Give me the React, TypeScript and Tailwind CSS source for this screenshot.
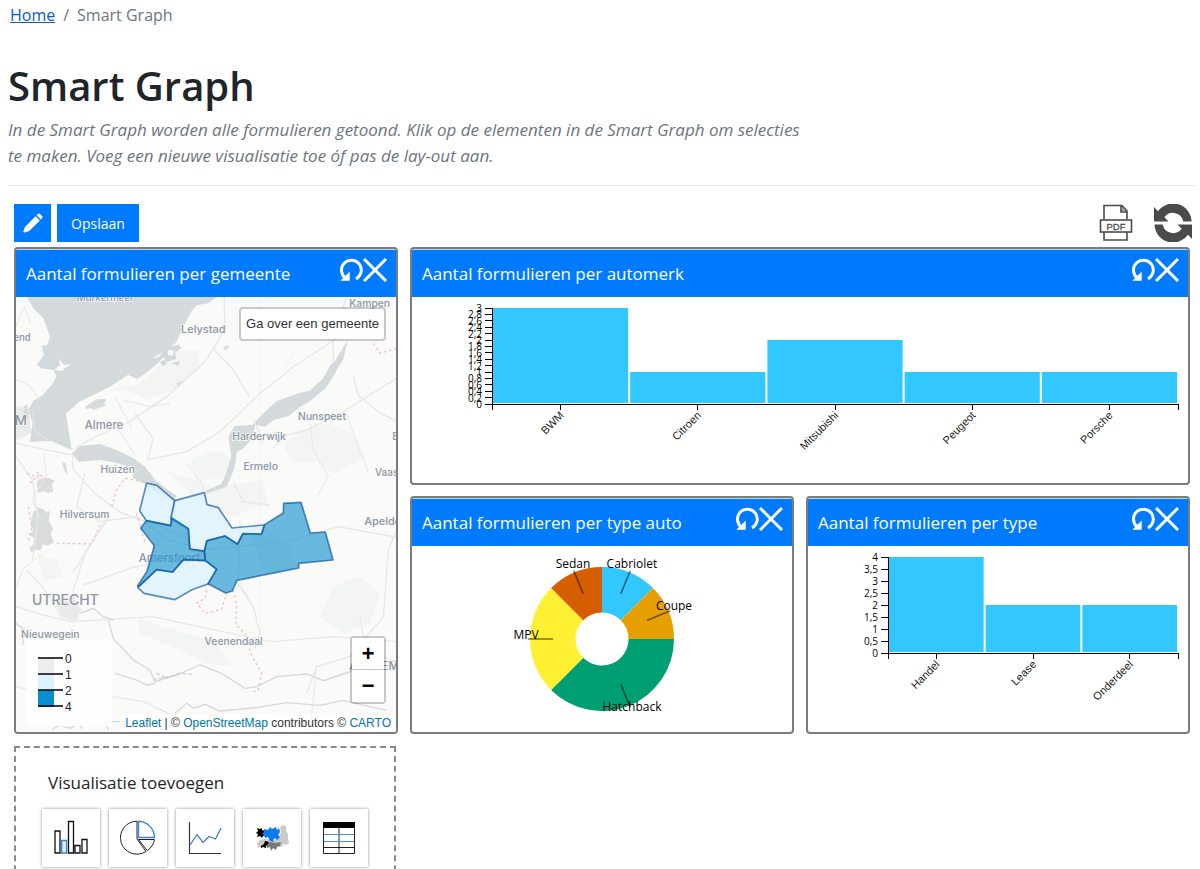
import { useState, type ReactNode } from 'react';

interface Datum {
  label: string;
  value: number;
}

interface PanelProps {
  title: string;
  className?: string;
  children: ReactNode;
}

interface BarChartProps {
  name: string;
  data: Datum[];
  max: number;
  step: number;
  width: number;
  left: number;
  right: number;
}

const brands: Datum[] = [
  { label: 'BWM', value: 3 },
  { label: 'Citroen', value: 1 },
  { label: 'Mitsubishi', value: 2 },
  { label: 'Peugeot', value: 1 },
  { label: 'Porsche', value: 1 },
];

const formTypes: Datum[] = [
  { label: 'Handel', value: 4 },
  { label: 'Lease', value: 2 },
  { label: 'Onderdeel', value: 2 },
];

const carTypes = [
  { label: 'Cabriolet', value: 1, color: '#33c7ff', x: 220, y: 22 },
  { label: 'Coupe', value: 1, color: '#e69f00', x: 262, y: 64 },
  { label: 'Hatchback', value: 3, color: '#009e73', x: 220, y: 165 },
  { label: 'MPV', value: 2, color: '#fff033', x: 114, y: 93 },
  { label: 'Sedan', value: 1, color: '#d55e00', x: 161, y: 22 },
];

const cities = [
  { name: 'Markermeer', x: 316, y: 182, size: 29, italic: true },
  { name: 'Kampen', x: 1109, y: 200, size: 31 },
  { name: 'Lelystad', x: 610, y: 279, size: 33 },
  { name: 'end', x: 66, y: 303, size: 29 },
  { name: 'Almere', x: 312, y: 566, size: 34 },
  { name: 'Nunspeet', x: 966, y: 541, size: 31 },
  { name: 'Harderwijk', x: 777, y: 600, size: 31 },
  { name: 'Ermelo', x: 782, y: 690, size: 31 },
  { name: 'Huizen', x: 353, y: 699, size: 31 },
  { name: 'Vaassen', x: 1186, y: 709, size: 30 },
  { name: 'Ep', x: 1195, y: 599, size: 30 },
  { name: 'Hilversum', x: 254, y: 835, size: 31 },
  { name: 'Apeldoorn', x: 1175, y: 855, size: 33 },
  { name: 'Amersfoort', x: 508, y: 966, size: 34 },
  { name: 'UTRECHT', x: 196, y: 1094, size: 42 },
  { name: 'AM', x: 48, y: 554, size: 40 },
  { name: 'Nieuwegein', x: 151, y: 1194, size: 31 },
  { name: 'Veenendaal', x: 701, y: 1214, size: 31 },
  { name: 'ARNHEM', x: 1122, y: 1290, size: 34 },
];

function ResetIcon() {
  return (
    <svg className="h-6 w-6" viewBox="0 0 24 24" fill="none" aria-hidden="true">
      <path d="M6.500 20A9.900 9.900 0 1 1 17 20.800" stroke="currentColor" strokeWidth="3" />
      <path d="M1.300 22.800h9.400V13.500L7.800 16.600Z" fill="currentColor" />
    </svg>
  );
}

function CloseIcon() {
  return (
    <svg className="h-6 w-6" viewBox="0 0 24 24" fill="none" aria-hidden="true">
      <path d="m1 1 22 22M23 1 1 23" stroke="currentColor" strokeWidth="3" />
    </svg>
  );
}

function PencilIcon() {
  return (
    <svg className="h-[22px] w-[22px]" viewBox="0 0 22 22" fill="currentColor" aria-hidden="true">
      <path d="m13.600 4.200 4.200 4.200L7.300 18.900l-4.600 1.600a1 1 0 0 1-1.300-1.300l1.700-4.500Z" />
      <path d="m14.600 3.200 1.300-1.300a1.500 1.500 0 0 1 2.100 0L20.100 4a1.500 1.500 0 0 1 0 2.100l-1.300 1.300Z" />
    </svg>
  );
}

function PdfIcon() {
  return (
    <svg className="h-[38px] w-[34px]" viewBox="0 0 34 38" fill="none" stroke="#4a4a4a" strokeWidth="1.6" aria-hidden="true">
      <path d="M5 15V1.500h18l5 5.500v8M5 28v8h23v-8" />
      <path d="M22 1.500V8h6" />
      <path d="m22.500 2 5 5.500h-5Z" fill="#4a4a4a" fillOpacity=".5" stroke="none" />
      <rect x="1.500" y="16" width="31" height="12" fill="#fff" />
      <text x="17" y="25.500" fontSize="9.500" fontFamily="Liberation Sans, sans-serif" textAnchor="middle" fill="#4a4a4a" stroke="#4a4a4a" strokeWidth=".3">PDF</text>
    </svg>
  );
}

function RefreshIcon() {
  const half = 'M0 3 4 7.200A18.500 18.500 0 0 1 37.500 17.500H29.200A10.500 10.500 0 0 0 10.400 13.200L14.500 17.500H0Z';

  return (
    <svg className="h-[38px] w-[38px]" viewBox="0 0 38 38" fill="#4a4a4a" aria-hidden="true">
      <path d={half} />
      <path d={half} transform="rotate(180 19 19)" />
    </svg>
  );
}

function Panel({ title, className = '', children }: PanelProps) {
  return (
    <section className={`flex min-w-0 flex-col overflow-hidden rounded-sm border-2 border-[#7c7c7c] ${className}`}>
      <header className="flex h-12 shrink-0 items-start justify-between border-t border-[#b5d7ff] bg-[#007bff] pl-2.5 pr-[9px] text-white">
        <h2 className="truncate text-[17px] leading-[47px]">{title}</h2>
        <div className="flex pt-2">
          <button type="button" aria-label="Herstellen">
            <ResetIcon />
          </button>
          <button type="button" aria-label="Verwijderen">
            <CloseIcon />
          </button>
        </div>
      </header>
      {children}
    </section>
  );
}

function BarChart({ name, data, max, step, width, left, right }: BarChartProps) {
  const top = 11;
  const bottom = 107;
  const band = (right - left) / data.length;
  const scale = (value: number) => bottom - (value / max) * (bottom - top);
  const ticks = Array.from({ length: Math.round(max / step) + 1 }, (_, i) => Math.round(i * step * 10) / 10);

  return (
    <svg className="w-full" viewBox={`0 0 ${width} 186`} role="img" aria-label={name}>
      {data.map((d, i) => (
        <rect
          key={d.label}
          x={left + 1 + i * band}
          y={scale(d.value)}
          width={band - 2}
          height={bottom - scale(d.value) - 1}
          fill="#33c7ff"
        />
      ))}
      <g stroke="#000" fill="none" shapeRendering="crispEdges">
        <path d={`M${left - 6} ${top}H${left}V${bottom}M${left} ${bottom + 6}V${bottom}H${right}v6`} />
        {ticks.map((t) => (
          <path key={t} d={`M${left - 7} ${scale(t)}h7`} />
        ))}
        {data.map((d, i) => (
          <path key={d.label} d={`M${left + (i + 0.5) * band} ${bottom}v6`} />
        ))}
      </g>
      <g fontSize="10" fontFamily="Open Sans, sans-serif" textAnchor="end">
        {ticks.map((t) => (
          <text key={t} x={left - 10} y={scale(t) + 4}>
            {String(t).replace('.', ',')}
          </text>
        ))}
      </g>
      <g fontSize="11" fontFamily="Liberation Sans, sans-serif" textAnchor="end" fill="#222">
        {data.map((d, i) => (
          <text key={d.label} transform={`translate(${left + (i + 0.5) * band + 4} ${bottom + 12}) rotate(-45)`}>
            {d.label}
          </text>
        ))}
      </g>
    </svg>
  );
}

function DonutChart() {
  const cx = 190;
  const cy = 93;
  const total = carTypes.reduce((sum, d) => sum + d.value, 0);
  const point = (r: number, turn: number) => {
    const a = turn * 2 * Math.PI;
    return `${(cx + r * Math.sin(a)).toFixed(2)} ${(cy - r * Math.cos(a)).toFixed(2)}`;
  };

  let sum = 0;
  const slices = carTypes.map((d) => {
    const start = sum / total;
    sum += d.value;
    return { ...d, start, end: sum / total, mid: (start + sum / total) / 2 };
  });

  return (
    <svg className="w-full" viewBox="0 0 380 186" role="img" aria-label="Aantal formulieren per type auto">
      {slices.map((s) => (
        <path
          key={s.label}
          fill={s.color}
          d={`M${point(72, s.start)}A72 72 0 0 1 ${point(72, s.end)}L${point(26.5, s.end)}A26.5 26.5 0 0 0 ${point(26.5, s.start)}Z`}
        />
      ))}
      {slices.map((s) => (
        <path key={s.label} d={`M${point(49, s.mid)}L${point(74, s.mid)}`} stroke="#000" strokeOpacity=".5" strokeWidth="1.6" />
      ))}
      <g fontSize="12" fontFamily="Open Sans, sans-serif" textAnchor="middle">
        {slices.map((s) => (
          <text key={s.label} x={s.x} y={s.y}>
            {s.label}
          </text>
        ))}
      </g>
    </svg>
  );
}

function MapDrawing() {
  return (
    <svg
      className="absolute inset-0 h-full w-full"
      viewBox="48 171 1140 1305"
      preserveAspectRatio="xMinYMin slice"
      role="img"
      aria-label="Kaart met gemeenten"
    >
      <rect x="0" y="150" width="1300" height="1400" fill="#fafaf8" />

      {/* woods and farmland */}
      <g fill="#f3f5f2">
        <path d="M330 450 420 430 530 335 595 330 600 385 520 450 440 480 380 450Z" />
        <path d="M850 620 900 570 980 550 1060 580 1100 650 1000 700 950 665 880 670Z" />
        <path d="M570 660 640 630 690 650 680 710 590 725Z" />
        <path d="M1000 1040 1080 1010 1140 1060 1110 1150 1030 1180 960 1130Z" />
        <path d="M410 1130 470 1155 560 1180 650 1210 700 1280 620 1270 520 1220 420 1180Z" />
        <path d="M750 890 860 900 900 990 800 1010Z" />
        <path d="M490 690 650 740 790 720 800 790 700 830 590 780Z" />
        <path d="M110 940 170 960 190 1010 130 1020Z" />
      </g>

      {/* built-up areas */}
      <g fill="#e9ebeb">
        <path d="M48 500 85 510 95 580 48 600Z" />
        <path d="M165 1085 220 1070 245 1110 225 1145 185 1130Z" />
      </g>
      <g fill="#d8dcdd">
        <path d="m255 500 35-22 30-2-8 14 8 6-40 14-10-6-12 4Z" />
        <path d="m110 725 12-10 6 6 18-8 18 10-8 10 4 22-18 4-8-6-20 6Z" />
        <path d="m100 815 14-6-2-8 20 8 4 8 14-4-4 30 14 24-8 14 10 26-20 10-14-4-6 18-14-2-14 8-6-14 12-8 2-22-14-8 12-14-8-20Z" />
        <path d="m70 500 12-8 5 40-16 14Z" />
        <path d="m185 665 10 30 8 10-6-35ZM670 322l14-7 3 7-12 10ZM530 430l16-8 4 6-16 12Z" />
      </g>

      {/* water */}
      <g fill="#d4d9dc">
        <path d="M78 165 100 205 130 235 150 290 142 315 125 318 132 345 110 375 125 385 160 390 170 410 155 435 128 465 100 482 85 510 98 550 90 605 155 603 215 630 207 580 198 520 238 485 330 440 430 374 528 308 545 270 558 245 575 212 590 196 625 190 660 165Z" />
        <path d="m385 405 60-48 30-5 25-30 35-8 10 10-20 14 4 18-28 10-10-14-20 20-35 28-25 17Z" />
        <path d="m515 370 25-8-6 16ZM480 365l16-6 4 14-14 4Z" />
        <path d="M216 640 240 618 300 612 350 630 400 655 435 680 470 725 530 768 522 782 480 765 440 735 400 715 395 685 350 668 300 660 235 665Z" />
        <path d="m685 590 18-32 55-4 30-32 42-38 70-26 28-6 40-35 25-45 10-6 40-65-14 60-13 18-15 28-25 38-45 38-35 20-30 25-45 12-25 20-30-5-10 40-25 30-20 10-8 50-14 35-10 20-62 22 1-10 46-20 14-30 16-54Z" />
      </g>
      <path d="m162 390 18-15-4-20 16 20 24-3-22 12-7 9Z" fill="#fafaf8" />
      <circle cx="512" cy="338" r="9" fill="#fafaf8" />

      {/* roads */}
      <g fill="none" stroke="#e6e8e8" strokeWidth="4">
        <path d="m215 630 70-40 95-40 120-80 110-100 35-50 30-55-3-100" />
        <path d="m640 325 60 65 48 80M405 520l55 75-18 66" />
        <path d="m440 660 120-25 100-60 115-110 105-85 100-65 70-48" />
        <path d="m48 610 70 15 100 20 0 40 70 80 80 55 100 35 110 50 60 100" />
        <path d="m700 725 30 60 80 10M790 610l-30-75" />
        <path d="m820 625 40-40 60-15 110-55 160-100" />
        <path d="m1060 410 15 55 60 50 55 30M1000 370l0-80 40-120" />
        <path d="m255 700-25 100 70 45 110-15 95 70 110 30 140-15 90-5 170-50 220 40 155 20" />
        <path d="m48 1100 80 25 90 20 240-15 210 45 150 30 180-15 190 15" />
        <path d="m230 1140-10-90 35-110 70-110M190 1140l-55-90-55-60M250 1035l140-50 140-35" />
        <path d="m705 1020 55 80 20 80-15 45M48 1340l80 20" />
        <path d="m340 1370 90 15 95 45 65 55M1190 870l-25 60-15 200-100 120-100 30-30 80" />
        <path d="m48 650 50 70 15 120-15 120M330 825l-110 170" />
      </g>
      <g fill="none" stroke="#e6e8e8" strokeWidth="3">
        <path d="m48 260 25-60 20 55M48 420l40 15 30 45M60 500l40 15 5 60 40 25" />
        <path d="m370 480 80 20 60-10M350 560l55 85M395 565l-50-95" />
        <path d="m720 840-5 180 50 90M930 550l10 80 45 80-35 60M1040 520l35 100 30 80" />
        <path d="m560 670 45 60 30 105M480 770l80 100-10 90 60 80" />
        <path d="m800 180 10-10M850 390l35-55M780 180v1050" opacity=".5" />
        <path d="m950 1280-20 190M1080 1130l15 90 95 50M210 1160l30 60 95 60" />
        <path d="m130 640 10 70-45 65 30 70M130 940l-60 45-22 60" />
      </g>

      {/* rivers */}
      <g fill="none" stroke="#d4d9dc" strokeWidth="4">
        <path d="m325 1140 15 55 60 65 50 30 15 35 65-20 70-30 65 25 70 45 35-5 60-30 90-8 50 20 60-20 90-30 68-10" />
        <path d="m345 1300 65 20 30 15 25-5M525 1420l35-30 20 15 35-12 45 20 110-10 90-15 100 8 70-15 130 30" />
        <path d="m155 1470 25-15 30 10 30-18 5 20M325 1470l-10-25 50 0 18 22" />
        <path d="m48 1150 25 20-5 45M240 1120l40-15 30 25 30 10" />
      </g>

      {/* region borders */}
      <g fill="none" stroke="#efc3ca" strokeWidth="4" strokeDasharray="8 8">
        <path d="m80 700 60 20-30-25M90 730l30-30M85 800l10 60-10 45M335 800l15-50 25-35 55 10" />
        <path d="m170 910 105 2 25-55M410 820l10 40 15 45M1120 310l20 30 50-15" />
        <path d="m620 1050-5 25-25 15 25 30 50-12 15-50M700 1050l10 45-3 60 30 25 15 60 33 60-10 50-15 5" />
      </g>
      <path d="m470 1300 30 15 35-15 40 2M460 1320l70-15" fill="none" stroke="#c9cfd1" strokeWidth="4" strokeDasharray="10 7" />

      <g fill="#8d96a6" fontFamily="Inter, sans-serif" fontWeight="500" textAnchor="middle" stroke="#fafaf8" strokeWidth="4" paintOrder="stroke">
        {cities.map((c) => (
          <text key={c.name} x={c.x} y={c.y} fontSize={c.size} fontStyle={c.italic ? 'italic' : undefined}>
            {c.name}
          </text>
        ))}
      </g>

      {/* municipalities */}
      <g transform="translate(0 690)" stroke="#08519c" strokeOpacity=".65" strokeWidth="5" strokeLinejoin="round">
        <g fill="#d9f3ff" fillOpacity=".75">
          <path d="m440 39 31 7 53 46-12 75-73-15-20-30Z" />
          <path d="m524 92 89-24 8 36 34 9 41 61 97-9-9 28-56-1-16 31-38-25-54 14-7 31-43-6-6-60-52-31Z" />
          <path d="m413 352 57-53 48 7 32-37 66 2 34 26-24 44-50 18-52 30-92-19Z" />
        </g>
        <g fill="#2498d0" fillOpacity=".68">
          <path d="m422 174 17-22 73 15 4-23 50 32 3 61 44 7 3 28-66-3-32 37-48-7-53 50-4-2 28-43 22-77Z" />
          <path d="m621 213 54-15 38 24 16-31 56 1 9-28 56-35 1-29 52-3 28 92 45-3 23 84-103 10v14l-185 37-14 32-20 6-53-28 26-43-34-26-3-28Z" />
        </g>
      </g>
    </svg>
  );
}

function MunicipalityMap() {
  const [, setZoom] = useState(9);

  return (
    <div className="relative flex-1 overflow-hidden font-['Liberation_Sans',sans-serif] text-[12px] text-[#333]">
      <MapDrawing />

      <div className="absolute right-2.5 top-2.5 h-[34px] rounded-sm border-2 border-black/20 bg-white bg-clip-padding px-[5px] text-[13px] leading-[30px]">
        Ga over een gemeente
      </div>

      <div className="absolute bottom-1.5 left-2.5 h-[86px] w-[86px] rounded bg-white/80 p-2.5">
        <svg className="h-[66px] w-[60px]" viewBox="0 0 60 66" role="img" aria-label="Legenda">
          <rect x="2" y="8" width="16" height="16" fill="#ededed" />
          <rect x="2" y="24" width="16" height="16" fill="#d9f3ff" />
          <rect x="2" y="40" width="16" height="17" fill="#0490cf" />
          {[0, 1, 2, 4].map((value, i) => (
            <g key={value}>
              <path d={`M2 ${8 + i * 16}h25`} stroke="#000" strokeWidth="1.4" />
              <text x="29" y={13 + i * 16} fontSize="12" fill="#222">
                {value}
              </text>
            </g>
          ))}
        </svg>
      </div>

      <div className="absolute bottom-7 right-2.5 flex w-9 flex-col rounded border-2 border-black/20 bg-clip-padding font-['Liberation_Mono',monospace] text-[22px] font-bold leading-9 text-black">
        <button type="button" aria-label="Inzoomen" className="h-8 border-b border-[#ccc] bg-white" onClick={() => setZoom((z) => z + 1)}>
          +
        </button>
        <button type="button" aria-label="Uitzoomen" className="h-8 bg-white" onClick={() => setZoom((z) => z - 1)}>
          −
        </button>
      </div>

      <div className="absolute bottom-0 right-0 h-[18px] bg-white/70 px-[5px] leading-[18px]">
        <a href="#leaflet" className="text-[#0078a8]">Leaflet</a> | © <a href="#osm" className="text-[#0078a8]">OpenStreetMap</a>{' '}
        contributors © <a href="#carto" className="text-[#0078a8]">CARTO</a>
      </div>
    </div>
  );
}

const visualisations = [
  {
    name: 'Staafdiagram',
    icon: (
      <g fill="#fff" stroke="#111" strokeWidth="1.3">
        <path d="M2 11h5v22H2ZM15.500 1.500h5V33h-5ZM22 25.500h5V33h-5ZM29 19.500h5V33h-5Z" />
        <path d="M8.700 20.500h5V33h-5Z" fill="#d9f0ff" stroke="#3b82d6" />
      </g>
    ),
  },
  {
    name: 'Cirkeldiagram',
    icon: (
      <g fill="none" stroke="#222">
        <path d="M17 1.200A16.500 16.500 0 1 0 26 31.500L17 19Z" />
        <path d="M18.500 19.500h16a16.500 16.500 0 0 1-7.300 11Z" />
        <path d="M18.500 1.200a16.500 16.500 0 0 1 16 16.300h-16Z" stroke="#3b82d6" strokeWidth="1.400" />
      </g>
    ),
  },
  {
    name: 'Lijndiagram',
    icon: (
      <g fill="none">
        <path d="M2.500 2v31.500H34" stroke="#333" strokeWidth="1.200" />
        <path d="m3 25 7-10.500 6 8 6-6 6.500 2.500L34 8" stroke="#3b82d6" strokeWidth="1.300" />
      </g>
    ),
  },
  {
    name: 'Kaart',
    icon: (
      <g>
        <path d="m27 6 3-1 2 2v4l2 3v5l1 4-3 2-2-1-3 3-5-2-4 2-6-3-3 3-5 1-1-5 3-3 5-1 10 1 5-4 1-5-1-3Z" fill="#c9c9c9" />
        <path d="m3 8 3 1 2-1v2l3 1-1 2 2 2-3 1-1 2-2-2-3 1 1-3-2-1 2-2Z" fill="#000" />
        <path d="m10 9 4 1 2-3 2 2 4-2 1 3 2-2 1 4-2 3 2 2-3 3-2-2-2 2 1 2-4-1-2-4-3 1-1-3-2-1 2-2Z" fill="#0a7bf0" />
        <path d="m7 26 3-2 1-3 4 1-1 3-2 1v2l-3-1-2 1Z" fill="#000" />
        <path d="m13 25 3-3 5 1 6-1-1 4-3 1-1 3-3-2-2 3-1-4-3 1Z" fill="#777" />
      </g>
    ),
  },
  {
    name: 'Tabel',
    icon: (
      <g fill="none">
        <path d="M2.500 3h31v30.500h-31ZM18 8v25.500M2.500 27.500h31" stroke="#222" />
        <path d="M2 2h32v6H2Z" fill="#000" />
        <path d="M3 14.500h30M3 21.500h30" stroke="#4b8edb" />
      </g>
    ),
  },
];

export default function App() {
  return (
    <div className="h-screen overflow-hidden bg-white font-['Open_Sans',sans-serif] text-[#212529]">
      <nav aria-label="breadcrumb" className="flex gap-2 px-2.5 pt-1 text-[16px] leading-[22px] text-[#6c757d]">
        <a href="#home" className="text-[#0a58ca] underline">Home</a>
        <span>/</span>
        <span>Smart Graph</span>
      </nav>

      <div className="ml-2 mr-[3px] border-b border-[#e9eaeb] pb-4 pt-9">
        <h1 className="text-[40px] font-semibold leading-[48px]">Smart Graph</h1>
        <p className="mt-[7px] max-w-[800px] text-[17px] italic leading-[26px] text-[#6c757d]">
          In de Smart Graph worden alle formulieren getoond. Klik op de elementen in de Smart Graph om selecties te maken. Voeg een
          nieuwe visualisatie toe óf pas de lay-out aan.
        </p>
      </div>

      <main className="pl-3.5 pr-2.5 pt-[18px]">
        <div className="-mr-0.5 flex items-center justify-between">
          <div className="flex gap-1.5">
            <button type="button" aria-label="Bewerken" className="flex h-[38px] w-[37px] items-center justify-center bg-[#007bff] text-white">
              <PencilIcon />
            </button>
            <button type="button" className="h-[38px] w-[82px] bg-[#007bff] text-[14px] text-white">
              Opslaan
            </button>
          </div>
          <div className="flex gap-[21px]">
            <button type="button" aria-label="Exporteer als PDF">
              <PdfIcon />
            </button>
            <button type="button" aria-label="Vernieuwen">
              <RefreshIcon />
            </button>
          </div>
        </div>

        <div className="mt-[5px] grid auto-rows-[238px] grid-cols-3 gap-x-3 gap-y-[11px]">
          <Panel title="Aantal formulieren per gemeente" className="row-span-2">
            <MunicipalityMap />
          </Panel>
          <Panel title="Aantal formulieren per automerk" className="col-span-2">
            <BarChart name="Aantal formulieren per automerk" data={brands} max={3} step={0.2} width={776} left={80} right={766} />
          </Panel>
          <Panel title="Aantal formulieren per type auto">
            <DonutChart />
          </Panel>
          <Panel title="Aantal formulieren per type">
            <BarChart name="Aantal formulieren per type" data={formTypes} max={4} step={0.5} width={380} left={80} right={370} />
          </Panel>
        </div>

        <div className="mt-3 grid grid-cols-3 gap-x-3">
          <section className="mr-0.5 border-2 border-dashed border-[#8a8a8a] px-[26px] pb-8 pt-5">
            <h2 className="pl-1.5 text-[17px] leading-[30px]">Visualisatie toevoegen</h2>
            <div className="mt-[11px] flex gap-[9px]">
              {visualisations.map((v) => (
                <button
                  key={v.name}
                  type="button"
                  aria-label={v.name}
                  className="flex h-[58px] w-[58px] shrink-0 items-center justify-center bg-white shadow-[0_0_3px_rgba(0,0,0,0.45)]"
                >
                  <svg className="h-9 w-9" viewBox="0 0 36 36" aria-hidden="true">
                    {v.icon}
                  </svg>
                </button>
              ))}
            </div>
          </section>
        </div>
      </main>
    </div>
  );
}
